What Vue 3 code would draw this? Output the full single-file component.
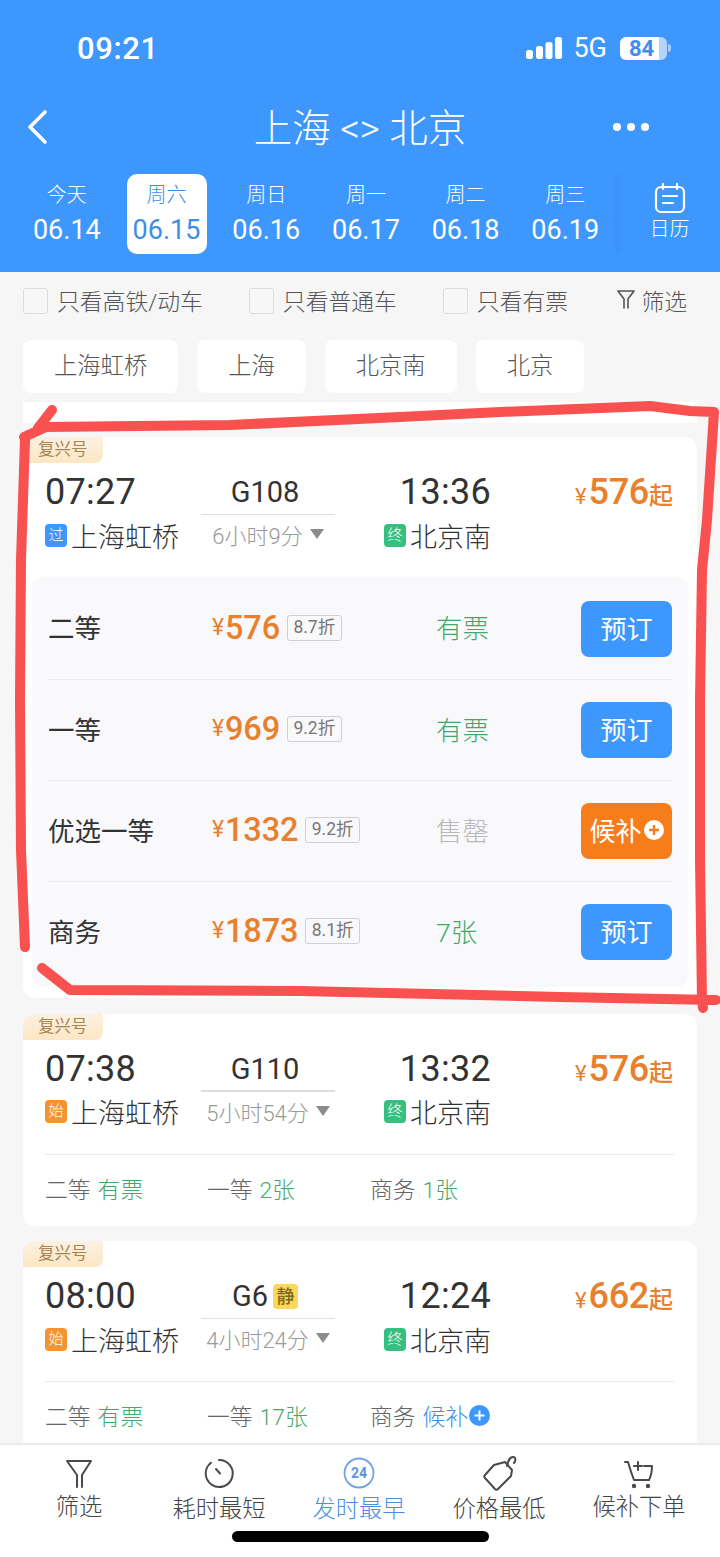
<script setup>
const dates = [
  { label: '今天', date: '06.14' },
  { label: '周六', date: '06.15', active: true },
  { label: '周日', date: '06.16' },
  { label: '周一', date: '06.17' },
  { label: '周二', date: '06.18' },
  { label: '周三', date: '06.19' },
]

const filters = [
  { text: '只看高铁/动车', cls: 'f1' },
  { text: '只看普通车', cls: 'f2' },
  { text: '只看有票', cls: 'f3' },
]

const stations = ['上海虹桥', '上海', '北京南', '北京']

const seats = [
  { name: '二等', price: '576', off: '8.7折', status: '有票', action: '预订' },
  { name: '一等', price: '969', off: '9.2折', status: '有票', action: '预订' },
  { name: '优选一等', price: '1332', off: '9.2折', status: '售罄', out: true, action: '候补' },
  { name: '商务', price: '1873', off: '8.1折', status: '7张', action: '预订' },
]

const trains = [
  {
    dep: '07:27', arr: '13:36', no: 'G108', dur: '6小时9分', from: '过', fromCls: 'blue', price: '576', seats,
  },
  {
    dep: '07:38', arr: '13:32', no: 'G110', dur: '5小时54分', from: '始', fromCls: 'orange', price: '576',
    meta: [
      { name: '二等', val: '有票' },
      { name: '一等', val: '2张' },
      { name: '商务', val: '1张' },
    ],
  },
  {
    dep: '08:00', arr: '12:24', no: 'G6', quiet: true, dur: '4小时24分', from: '始', fromCls: 'orange', price: '662',
    meta: [
      { name: '二等', val: '有票' },
      { name: '一等', val: '17张' },
      { name: '商务', val: '候补', wait: true },
    ],
  },
]

const tabs = [
  { key: 'filter', label: '筛选' },
  { key: 'clock', label: '耗时最短', low: true },
  { key: 'early', label: '发时最早', low: true, active: true },
  { key: 'tag', label: '价格最低', low: true },
  { key: 'cart', label: '候补下单' },
]
</script>

<template>
  <div class="page">
    <header class="head">
      <div class="status">
        <span class="clock">09:21</span>
        <div class="status-right">
          <svg class="signal" width="36" height="22" viewBox="0 0 36 22">
            <rect x="0" y="13" width="7" height="9" rx="2.5" fill="#fff" />
            <rect x="10" y="9" width="7" height="13" rx="2.5" fill="#fff" />
            <rect x="19.500" y="5" width="7" height="17" rx="2.5" fill="#fff" />
            <rect x="29" y="0" width="7" height="22" rx="2.5" fill="#fff" />
          </svg>
          <span class="net">5G</span>
          <div class="battery"><span>84</span></div>
          <i class="nub" />
        </div>
      </div>

      <div class="nav">
        <svg class="back" width="24" height="36" viewBox="0 0 24 36">
          <path d="M21 3 6 18l15 15" fill="none" stroke="#fff" stroke-width="3.600" stroke-linecap="round" stroke-linejoin="round" />
        </svg>
        <h1 class="title">上海 &lt;&gt; 北京</h1>
        <div class="dots"><i /><i /><i /></div>
      </div>

      <div class="date-row">
        <div v-for="d in dates" :key="d.date" class="date-cell">
          <div class="date-box" :class="{ active: d.active }">
            <span class="d-label">{{ d.label }}</span>
            <span class="d-num">{{ d.date }}</span>
          </div>
        </div>
        <div class="cal">
          <svg width="32" height="30" viewBox="0 0 32 30">
            <rect x="2" y="4" width="28" height="25" rx="5" fill="none" stroke="#fff" stroke-width="2.200" />
            <path d="M9 1v5M23 1v5M9 13h14M9 20h10" fill="none" stroke="#fff" stroke-width="2.200" stroke-linecap="round" />
          </svg>
          <span>日历</span>
        </div>
      </div>
    </header>

    <main class="body">
      <div class="filters">
        <label v-for="f in filters" :key="f.text" class="check" :class="f.cls">
          <i class="box" />
          <span>{{ f.text }}</span>
        </label>
        <div class="filter-btn">
          <svg width="18" height="20" viewBox="0 0 18 20">
            <path d="M1 1h16l-6 8v9M7 18V9L1 1" fill="none" stroke="#555" stroke-width="1.600" stroke-linecap="round" stroke-linejoin="round" />
          </svg>
          <span>筛选</span>
        </div>
      </div>

      <div class="chips">
        <span v-for="s in stations" :key="s" class="chip">{{ s }}</span>
      </div>

      <div class="tail" />

      <article v-for="t in trains" :key="t.no" class="card">
        <div class="badge">复兴号</div>
        <div class="route">
          <span class="time">{{ t.dep }}</span>
          <div class="train-no">
            <span>{{ t.no }}</span>
            <b v-if="t.quiet" class="quiet">静</b>
          </div>
          <span class="time right">{{ t.arr }}</span>
          <div class="price">
            <small>¥</small><span>{{ t.price }}</span><em>起</em>
          </div>

          <div class="station">
            <i class="mark" :class="t.fromCls">{{ t.from }}</i>
            <span>上海虹桥</span>
          </div>
          <div class="dur">
            <span>{{ t.dur }}</span>
            <i class="tri" />
          </div>
          <div class="station right">
            <i class="mark green">终</i>
            <span>北京南</span>
          </div>
        </div>

        <div v-if="t.seats" class="panel">
          <div v-for="s in t.seats" :key="s.name" class="seat">
            <span class="seat-name">{{ s.name }}</span>
            <div class="seat-price">
              <small>¥</small><span>{{ s.price }}</span>
              <em>{{ s.off }}</em>
            </div>
            <span class="seat-status" :class="{ out: s.out }">{{ s.status }}</span>
            <button class="btn" :class="{ wait: s.out }">
              {{ s.action }}
              <svg v-if="s.out" width="20" height="20" viewBox="0 0 20 20">
                <circle cx="10" cy="10" r="10" fill="#fff" />
                <path d="M10 5v10M5 10h10" stroke="#f77d1b" stroke-width="2.400" />
              </svg>
            </button>
          </div>
        </div>

        <div v-else class="meta">
          <div v-for="m in t.meta" :key="m.name" class="meta-item">
            <span>{{ m.name }}</span>
            <b :class="{ wait: m.wait }">{{ m.val }}</b>
            <svg v-if="m.wait" width="21" height="21" viewBox="0 0 21 21">
              <circle cx="10.500" cy="10.500" r="10.500" fill="#3e97fd" />
              <path d="M10.500 5.500v10M5.500 10.500h10" stroke="#fff" stroke-width="2" />
            </svg>
          </div>
        </div>
      </article>
    </main>

    <nav class="tabbar">
      <div class="tabs">
        <div v-for="t in tabs" :key="t.key" class="tab" :class="{ active: t.active, low: t.low }">
          <svg class="tab-icon" width="40" height="36" viewBox="0 0 40 36" fill="none" stroke="#4a4a4a" stroke-width="2" stroke-linecap="round" stroke-linejoin="round">
            <path v-if="t.key === 'filter'" d="M8 6h24L23 20v12M18 32V20L8 6" />
            <template v-else-if="t.key === 'clock'">
              <path d="M20 5a13.500 13.500 0 1 1-8 2.800" />
              <path d="M17 14l4 4.500" />
            </template>
            <template v-else-if="t.key === 'early'">
              <circle cx="20" cy="18" r="14.500" stroke="#6fa3e6" stroke-width="1.800" />
              <text x="20" y="23" text-anchor="middle" class="n24">24</text>
            </template>
            <template v-else-if="t.key === 'tag'">
              <path d="M15 10 26 7l7 8-1 6-13 13c-1 1-2 1-3 0L6 23c-1-1-1-2 0-3z" />
              <path d="M28 11c1-4 2-9 6-9 3 0 3 4 1 6" />
            </template>
            <template v-else>
              <path d="M6 7h3c2 7 4 13 6 18h15c2-4 3-9 3-14h-8" />
              <path d="M19 7v8M15 11h8" />
              <circle cx="15" cy="31" r="1.200" fill="#4a4a4a" />
              <circle cx="29" cy="31" r="1.200" fill="#4a4a4a" />
            </template>
          </svg>
          <span class="tab-label">{{ t.label }}</span>
        </div>
      </div>
      <div class="home" />
    </nav>

    <!-- hand-drawn marker on top of the screenshot -->
    <svg class="scribble" width="720" height="1557" viewBox="0 0 720 1557">
      <path
        d="M52 410 38 428M24 437 46 427 230 425 400 417 500 412 650 406 690 411 714 412 707 520 702 570 700 700 700 860 702 1000 703 1008M716 1000 560 997 300 991 70 990 42 968M25 947 21 850 20 700 21 560 25 440"
        fill="none"
        stroke="#f95050"
        stroke-width="10"
        stroke-linecap="round"
        stroke-linejoin="round"
      />
    </svg>
  </div>
</template>

<style scoped>
.page {
  position: relative;
  width: 720px;
  height: 1557px;
  display: flex;
  flex-direction: column;
  overflow: hidden;
  background: #f6f6f7;
  font-family: Roboto, "Noto Sans CJK SC", sans-serif;
  color: #333;
}

i,
em {
  font-style: normal;
}

.head {
  height: 272px;
  flex: none;
  background: #3e97fd;
  color: #fff;
}

.status {
  height: 96px;
  display: flex;
  align-items: center;
  justify-content: space-between;
  padding: 0 49px 0 77px;
}

.clock {
  font-size: 31px;
  font-weight: 500;
  letter-spacing: 0.6px;
}

.status-right {
  display: flex;
  align-items: center;
}

.net {
  margin: 0 13px 0 11px;
  font-size: 27px;
}

.battery {
  width: 47px;
  height: 23px;
  border-radius: 6px;
  background: linear-gradient(90deg, #fff 0 83%, #b5d3fb 83%);
  display: flex;
  align-items: center;
  justify-content: center;
  padding-right: 4px;
  box-sizing: border-box;
  color: #3e8ee8;
  font-size: 22px;
  font-weight: 700;
}

.nub {
  width: 3px;
  height: 8px;
  margin-left: 1px;
  border-radius: 0 3px 3px 0;
  background: #a9cdfa;
}

.nav {
  height: 62px;
  position: relative;
  display: flex;
  align-items: center;
  justify-content: center;
}

.back {
  position: absolute;
  left: 24px;
  top: 13px;
}

.title {
  margin: 3px 0 0;
  font-size: 38.500px;
  font-weight: 300;
  line-height: 59px;
}

.dots {
  position: absolute;
  left: 613px;
  top: 27px;
  display: flex;
  gap: 6px;
}

.dots i {
  width: 8px;
  height: 8px;
  border-radius: 50%;
  background: #fff;
}

.date-row {
  display: flex;
  margin-top: 16px;
  padding-left: 17px;
}

.date-cell {
  width: 99.700px;
  flex: none;
  display: flex;
  justify-content: center;
}

.date-box {
  width: 80px;
  height: 80px;
  border-radius: 10px;
  display: flex;
  flex-direction: column;
  align-items: center;
}

.date-box.active {
  background: #fff;
  color: #3e8ee8;
}

.d-label {
  margin-top: 7px;
  font-size: 20px;
  font-weight: 300;
  line-height: 28px;
}

.d-num {
  margin-top: 3px;
  font-size: 27px;
  line-height: 36px;
}

.cal {
  flex: 1;
  height: 80px;
  display: flex;
  flex-direction: column;
  align-items: center;
  padding-left: 4px;
  padding-top: 9px;
  box-sizing: border-box;
  font-size: 20px;
  font-weight: 300;
  line-height: 30px;
  background: linear-gradient(90deg, rgba(30, 110, 220, 0.1), rgba(30, 110, 220, 0) 12px);
}

.cal svg {
  margin-bottom: 1px;
}

.body {
  flex: 1;
  min-height: 0;
  overflow: hidden;
}

.filters {
  height: 56px;
  position: relative;
  display: flex;
  align-items: center;
  padding-left: 23px;
  font-size: 22.800px;
  font-weight: 300;
  color: #555;
}

.check {
  display: flex;
  align-items: center;
  gap: 9px;
}

.f2 {
  margin-left: 46px;
}

.f3 {
  margin-left: 46px;
}

.box {
  width: 25px;
  height: 26px;
  margin-top: 2px;
  box-sizing: border-box;
  border: 1.500px solid #dcdcdc;
  border-radius: 3px;
  background: #f7f7f7;
}

.filter-btn {
  margin-left: auto;
  margin-right: 33px;
  display: flex;
  align-items: center;
  gap: 6px;
}

.chips {
  display: flex;
  gap: 19px;
  margin-top: 12px;
  padding-left: 23px;
}

.chip {
  height: 53px;
  padding: 0 31px;
  border-radius: 8px;
  background: #fff;
  font-size: 23.300px;
  font-weight: 300;
  line-height: 53px;
  color: #555;
}

.tail {
  height: 21px;
  margin: 9px 23px 14px;
  background: #fff;
}

.card {
  margin: 0 23px 15.500px;
  border-radius: 12px;
  background: #fff;
  overflow: hidden;
}

.badge {
  width: 80px;
  height: 26px;
  padding-left: 15px;
  box-sizing: border-box;
  background: linear-gradient(180deg, #fbf1e2, #fde6c4);
  border-radius: 8px 0 8px 0;
  font-size: 16.500px;
  line-height: 26px;
  color: #a98450;
}

.route {
  display: grid;
  grid-template-columns: 156px 134px 156px 1fr;
  grid-template-rows: 46px 40px;
  margin: 6px 24px 0 22px;
  align-items: center;
}

.time {
  font-size: 36px;
  letter-spacing: 0.3px;
  color: #333;
}

.right {
  justify-self: end;
}

.train-no {
  height: 46px;
  display: flex;
  align-items: center;
  justify-content: center;
  gap: 5px;
  padding-right: 6px;
  box-sizing: border-box;
  font-size: 29px;
  color: #333;
  position: relative;
}

.train-no::after {
  content: "";
  position: absolute;
  left: 0;
  right: 0;
  bottom: 0;
  height: 1.500px;
  background: #dedede;
}

.quiet {
  width: 25px;
  height: 25px;
  border-radius: 4px;
  background: #fbd85a;
  font-size: 18px;
  font-weight: 500;
  line-height: 25px;
  text-align: center;
  color: #7d6a1e;
}

.price {
  justify-self: end;
  align-self: center;
  color: #e8802e;
  white-space: nowrap;
}

.price small {
  font-size: 22px;
  margin-right: 2px;
}

.price span {
  font-size: 36px;
  font-weight: 500;
  letter-spacing: -0.3px;
}

.price em {
  font-size: 24px;
  font-weight: 500;
}

.station {
  display: flex;
  align-items: center;
  gap: 4px;
  font-size: 27px;
  font-weight: 300;
  color: #333;
  white-space: nowrap;
}

.station.right {
  justify-self: end;
}

.mark {
  width: 22px;
  height: 23px;
  border-radius: 4px;
  font-size: 15px;
  line-height: 23px;
  text-align: center;
  color: #fff;
}

.mark.blue {
  background: #3e97fd;
}

.mark.orange {
  background: #f59331;
}

.mark.green {
  background: #35c07f;
}

.dur {
  display: flex;
  align-items: center;
  justify-content: center;
  gap: 7px;
  margin-bottom: 2px;
  font-size: 22px;
  font-weight: 300;
  color: #999;
}

.tri {
  width: 0;
  height: 0;
  border-left: 7px solid transparent;
  border-right: 7px solid transparent;
  border-top: 10px solid #8c8c8c;
}

.panel {
  margin: 22px 9px 11px;
  padding: 1px 16px 5px;
  border-radius: 10px;
  background: #f9f9fc;
}

.seat {
  height: 101px;
  box-sizing: border-box;
  display: grid;
  grid-template-columns: 164px 224px 145px 91px;
  align-items: center;
  border-top: 1px solid #ebecef;
}

.seat:first-child {
  border-top: 0;
}

.seat-name {
  padding-bottom: 4px;
  font-size: 26.500px;
  color: #333;
}

.seat-price {
  display: flex;
  align-items: center;
  padding-bottom: 2px;
  color: #e8802e;
}

.seat-price small {
  font-size: 23px;
  margin-right: 1px;
  align-self: flex-end;
  margin-bottom: 6px;
}

.seat-price span {
  font-size: 32.500px;
  font-weight: 500;
  letter-spacing: -0.2px;
}

.seat-price em {
  margin-left: 7px;
  height: 24px;
  padding: 0 5.500px;
  border: 1px solid #cfd0d4;
  border-radius: 3px;
  font-size: 17.500px;
  line-height: 23px;
  color: #777;
}

.seat-status {
  padding-bottom: 4px;
  font-size: 26.500px;
  font-weight: 300;
  color: #3fa96a;
}

.seat-status.out {
  color: #b8b8b8;
}

.btn {
  width: 91px;
  height: 56px;
  padding: 0 0 3px;
  border: 0;
  border-radius: 8px;
  background: #3e97fd;
  color: #fff;
  font-family: inherit;
  font-size: 26px;
  display: flex;
  align-items: center;
  justify-content: center;
  gap: 2px;
}

.btn.wait {
  background: #f77d1b;
}

.meta {
  display: grid;
  grid-template-columns: 162px 163px 1fr;
  height: 72px;
  box-sizing: border-box;
  padding-bottom: 4px;
  margin: 22px 23px 0 22px;
  border-top: 1px solid #e8e8e8;
  align-items: center;
}

.meta-item {
  display: flex;
  align-items: center;
  gap: 7px;
  font-size: 22.800px;
  font-weight: 300;
  color: #666;
}

.meta-item b {
  font-weight: 300;
  color: #3fa96a;
}

.meta-item b.wait {
  color: #3e8ee8;
  margin-right: -6px;
}

.tabbar {
  height: 114px;
  flex: none;
  box-sizing: border-box;
  border-top: 2px solid #ececec;
  background: #fff;
}

.tabs {
  display: grid;
  grid-template-columns: repeat(5, 140px);
  padding: 10px 0 0 9px;
}

.tab {
  display: flex;
  flex-direction: column;
  align-items: center;
  font-size: 23.300px;
  font-weight: 300;
  color: #444;
}

.tab-label {
  line-height: 32px;
  white-space: nowrap;
}

.tab.low .tab-label {
  margin-top: 2px;
}

.tab.active {
  color: #4a90e2;
}

.n24 {
  fill: #5b93dc;
  stroke: none;
  font-size: 14px;
  font-weight: 700;
  font-family: Roboto, sans-serif;
}

.home {
  width: 257px;
  height: 11px;
  margin: 6px 0 0 232px;
  border-radius: 6px;
  background: #000;
}

.scribble {
  position: absolute;
  left: 0;
  top: 0;
  pointer-events: none;
}
</style>
